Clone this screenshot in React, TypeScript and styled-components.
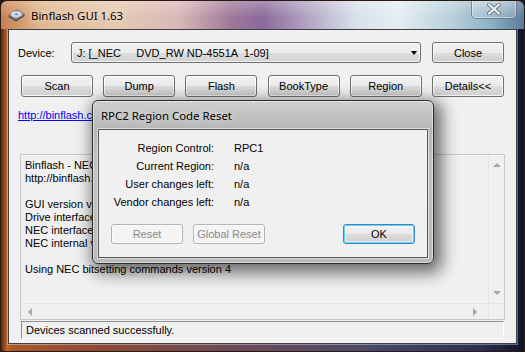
import React from "react";
import styled, { createGlobalStyle } from "styled-components";

const Global = createGlobalStyle`
  html, body { margin: 0; padding: 0; overflow: hidden; background: #1a1a22; }
  * { box-sizing: border-box; }
`;

const UI = `"Liberation Sans", Arial, sans-serif`;
const TITLE = `"Noto Sans", "Liberation Sans", sans-serif`;

const Window = styled.div`
  position: relative;
  width: 525px;
  height: 352px;
  display: flex;
  flex-direction: column;
  border-radius: 7px 7px 0 0;
  border: 1px solid #2a1a14;
  background: linear-gradient(90deg, #5a2a10 0%, #c0682c 1.2%, #a8582a 2%, #8a4a38 20%, #6a4a5a 45%, #4a4a6a 70%, #2a3050 92%, #10142a 100%);
  font-family: ${UI};
  font-size: 11px;
  color: #000;
  overflow: hidden;
`;

const TitleBar = styled.div`
  height: 28px;
  flex: none;
  display: flex;
  align-items: center;
  padding-left: 7px;
  gap: 6px;
  background: linear-gradient(90deg,
    #c88050 0%, #e0b890 8%, #e6cab0 22%, #d8b8b8 34%, #a07898 44%,
    #8a6a9c 50%, #b0a0c0 58%, #d8e2ea 68%, #e4eef2 76%, #b8d0da 86%, #8ab0c4 94%, #5a7a98 100%);
  position: relative;
  &::after {
    content: "";
    position: absolute;
    inset: 0;
    background: linear-gradient(180deg, rgba(255,255,255,0.25), rgba(255,255,255,0) 60%);
    pointer-events: none;
  }
`;

const TitleText = styled.span`
  font-family: ${TITLE};
  font-size: 11.4px;
  color: #000;
  flex: 1;
  position: relative;
  z-index: 1;
  text-shadow: 0 0 6px rgba(255,255,255,0.9);
`;

const CloseCap = styled.div`
  align-self: flex-start;
  margin-top: -1px;
  margin-right: 7px;
  width: 46px;
  height: 19px;
  border: 1px solid rgba(60,70,90,0.55);
  border-top: none;
  border-radius: 0 0 5px 5px;
  background: linear-gradient(180deg, rgba(255,255,255,0.35), rgba(200,215,225,0.25));
  box-shadow: inset 0 0 0 1px rgba(255,255,255,0.45);
  display: flex;
  align-items: center;
  justify-content: center;
  position: relative;
  z-index: 1;
`;

const Client = styled.div`
  flex: 1;
  margin: 0 7px 7px 7px;
  border: 1px solid #3e3e48;
  background: #f0f0f0;
  display: flex;
  flex-direction: column;
  box-shadow: 0 0 0 1px rgba(255,255,255,0.35);
`;

const DeviceRow = styled.div`
  margin-top: 12px;
  padding-left: 9px;
  display: flex;
  align-items: center;
  height: 21px;
`;

const Label = styled.span`
  width: 53px;
`;

const Combo = styled.div`
  width: 350px;
  height: 21px;
  border: 1px solid #707070;
  border-radius: 3px;
  background: linear-gradient(180deg, #f3f3f3 0%, #ebebeb 50%, #dddddd 51%, #d2d2d2 100%);
  box-shadow: inset 0 0 0 1px rgba(255,255,255,0.7);
  display: flex;
  align-items: center;
  padding: 0 3px 0 5px;
  white-space: pre;
`;

const ComboText = styled.span`
  flex: 1;
`;

const ComboArrow = styled.span`
  width: 0;
  height: 0;
  border-left: 3.5px solid transparent;
  border-right: 3.5px solid transparent;
  border-top: 4px solid #000;
  margin-top: 1px;
`;

const Button = styled.button<{ $w?: number; $h?: number; $disabled?: boolean; $default?: boolean }>`
  width: ${(p) => p.$w ?? 72}px;
  height: ${(p) => p.$h ?? 22}px;
  padding: 0;
  font-family: ${UI};
  font-size: 11px;
  color: ${(p) => (p.$disabled ? "#8a8a8a" : "#000")};
  border-radius: 3px;
  border: 1px solid ${(p) => (p.$disabled ? "#b4b4b4" : p.$default ? "#3c86c0" : "#707070")};
  background: ${(p) =>
    p.$disabled
      ? "#f4f4f4"
      : "linear-gradient(180deg, #f2f2f2 0%, #ebebeb 50%, #dddddd 51%, #cfcfcf 100%)"};
  box-shadow: ${(p) =>
    p.$default
      ? "inset 0 0 0 1px #6ad0f4, inset 0 0 0 2px rgba(255,255,255,0.5)"
      : p.$disabled
      ? "inset 0 0 0 1px #fbfbfb"
      : "inset 0 0 0 1px rgba(255,255,255,0.75)"};
  flex: none;
`;

const ButtonRow = styled.div`
  margin-top: 12px;
  padding: 0 12px;
  display: flex;
  justify-content: space-between;
`;

const Link = styled.a`
  margin-top: 12px;
  margin-left: 9px;
  line-height: 13px;
  color: #0000ff;
  text-decoration: underline;
  align-self: flex-start;
`;

const TextBox = styled.div`
  margin: 32px 11px 0 11px;
  height: 166px;
  border: 1px solid #c9c9c9;
  display: grid;
  grid-template-columns: 1fr 16px;
  grid-template-rows: 1fr 16px;
  background: #f0f0f0;
`;

const TextContent = styled.div`
  padding: 4px 4px;
  line-height: 13px;
  white-space: pre;
  overflow: hidden;
`;

const VScroll = styled.div`
  border-left: 1px solid #e4e4e4;
  background: #f0f0f0;
  display: flex;
  flex-direction: column;
  justify-content: space-between;
  align-items: center;
  padding: 8px 0 8px;
`;

const HScroll = styled.div`
  border-top: 1px solid #e4e4e4;
  background: #f0f0f0;
  display: flex;
  justify-content: space-between;
  align-items: center;
  padding: 0 11px 0 7px;
`;

const Corner = styled.div`
  background: #f0f0f0;
  border-top: 1px solid #e4e4e4;
  border-left: 1px solid #e4e4e4;
`;

const Arrow = styled.span<{ $dir: "up" | "down" | "left" | "right" }>`
  width: 0;
  height: 0;
  border: 4px solid transparent;
  ${(p) =>
    p.$dir === "up"
      ? "border-bottom: 4px solid #a6a6a6; border-top: 0;"
      : p.$dir === "down"
      ? "border-top: 4px solid #a6a6a6; border-bottom: 0;"
      : p.$dir === "left"
      ? "border-right: 4px solid #a6a6a6; border-left: 0;"
      : "border-left: 4px solid #a6a6a6; border-right: 0;"}
`;

const StatusBar = styled.div`
  margin: 1px 12px 4px 12px;
  height: 18px;
  border: 1px solid;
  border-color: #8e8e8e #ffffff #ffffff #8e8e8e;
  display: flex;
  align-items: center;
  padding-left: 4px;
`;

/* Dialog */
const Dialog = styled.div`
  position: absolute;
  left: 91px;
  top: 99px;
  width: 342px;
  height: 164px;
  border: 1px solid #2e2e2e;
  border-radius: 6px;
  background: linear-gradient(180deg, #cfcfcf 0%, #bdbdbd 12%, #b6b6b6 18%, #c2c2c2 40%, #bababa 100%);
  box-shadow: 4px 5px 16px 4px rgba(0,0,0,0.55), inset 0 0 0 1px rgba(255,255,255,0.45);
  display: flex;
  flex-direction: column;
  padding: 0 5px 5px 5px;
  z-index: 2;
`;

const DialogTitle = styled.div`
  height: 28px;
  flex: none;
  display: flex;
  align-items: center;
  padding-left: 3px;
  font-family: ${TITLE};
  font-size: 11.4px;
  color: #000;
  text-shadow: 0 0 6px rgba(255,255,255,0.8);
`;

const DialogClient = styled.div`
  flex: 1;
  background: #f0f0f0;
  border: 1px solid #585858;
  box-shadow: 0 0 0 1px rgba(255,255,255,0.5);
  display: flex;
  flex-direction: column;
`;

const InfoGrid = styled.div`
  margin-top: 9px;
  display: grid;
  grid-template-columns: 115px auto;
  column-gap: 20px;
  grid-auto-rows: 18px;
  align-items: center;
`;

const InfoLabel = styled.span`
  text-align: right;
`;

const DialogButtons = styled.div`
  margin-top: 13px;
  padding: 0 12px 0 12px;
  display: flex;
  gap: 10px;
`;

const Spacer = styled.div`
  flex: 1;
`;

const DriveIcon = () => (
  <svg width="17" height="16" viewBox="0 0 17 16" style={{ position: "relative", zIndex: 1 }}>
    <path d="M1 10 L8 14 L16 9 L16 7 L9 3 L1 8 Z" fill="#6c6f76" stroke="#3a3c42" strokeWidth="0.8" />
    <path d="M1 8 L8 12 L16 7 L9 3 Z" fill="#a9adb4" />
    <ellipse cx="8.3" cy="7.2" rx="5.6" ry="3.3" fill="#dfe3ea" stroke="#7a808a" strokeWidth="0.6" />
    <ellipse cx="8.3" cy="7.2" rx="3.6" ry="2" fill="#b9d2ea" opacity="0.7" />
    <ellipse cx="8.3" cy="7.2" rx="1.2" ry="0.7" fill="#5a5f68" />
    <path d="M8 12.2 L8 14" stroke="#2e3036" strokeWidth="0.6" />
  </svg>
);

const CloseGlyph = () => (
  <svg width="14" height="12" viewBox="0 0 14 12">
    <path d="M2 1.5 L12 10.5 M12 1.5 L2 10.5" stroke="#6a7480" strokeWidth="4" strokeLinecap="round" />
    <path d="M2 1.5 L12 10.5 M12 1.5 L2 10.5" stroke="#eef2f4" strokeWidth="2.2" strokeLinecap="round" />
  </svg>
);

const lines = [
  "Binflash - NEC firmware flasher",
  "http://binflash.cdfreaks.com",
  "",
  "GUI version v1.63",
  "Drive interface version 1.63",
  "NEC interface version 1.63",
  "NEC internal version 1.63",
  "",
  "Using NEC bitsetting commands version 4",
];

const info: [string, string][] = [
  ["Region Control:", "RPC1"],
  ["Current Region:", "n/a"],
  ["User changes left:", "n/a"],
  ["Vendor changes left:", "n/a"],
];

export default function App() {
  return (
    <>
      <Global />
      <Window>
        <TitleBar>
          <DriveIcon />
          <TitleText>Binflash GUI 1.63</TitleText>
          <CloseCap>
            <CloseGlyph />
          </CloseCap>
        </TitleBar>
        <Client>
          <DeviceRow>
            <Label>Device:</Label>
            <Combo>
              <ComboText>{"J: [_NEC     DVD_RW ND-4551A  1-09]"}</ComboText>
              <ComboArrow />
            </Combo>
            <Button $w={72} $h={21} style={{ marginLeft: 11 }}>Close</Button>
          </DeviceRow>
          <ButtonRow>
            {["Scan", "Dump", "Flash", "BookType", "Region", "Details<<"].map((b) => (
              <Button key={b}>{b}</Button>
            ))}
          </ButtonRow>
          <Link href="#">http://binflash.cdfreaks.com</Link>
          <TextBox>
            <TextContent>{lines.join("\n")}</TextContent>
            <VScroll>
              <Arrow $dir="up" />
              <Arrow $dir="down" />
            </VScroll>
            <HScroll>
              <Arrow $dir="left" />
              <Arrow $dir="right" />
            </HScroll>
            <Corner />
          </TextBox>
          <StatusBar>Devices scanned successfully.</StatusBar>
        </Client>
        <Dialog>
          <DialogTitle>RPC2 Region Code Reset</DialogTitle>
          <DialogClient>
            <InfoGrid>
              {info.map(([k, v]) => (
                <React.Fragment key={k}>
                  <InfoLabel>{k}</InfoLabel>
                  <span>{v}</span>
                </React.Fragment>
              ))}
            </InfoGrid>
            <DialogButtons>
              <Button $h={20} $disabled>Reset</Button>
              <Button $h={20} $disabled>Global Reset</Button>
              <Spacer />
              <Button $h={20} $default>OK</Button>
            </DialogButtons>
          </DialogClient>
        </Dialog>
      </Window>
    </>
  );
}
